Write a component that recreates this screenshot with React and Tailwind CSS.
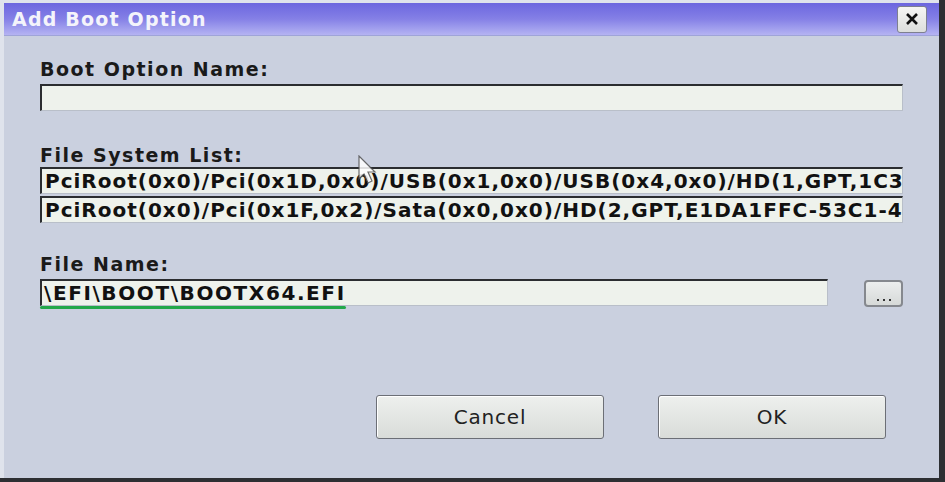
import React from 'react';

const font = { fontFamily: '"DejaVu Sans", Verdana, sans-serif' };

const Field = ({ className = '', children }) => (
  <div
    className={`flex items-center overflow-hidden whitespace-nowrap bg-[#eef2ec] border-t-2 border-l-2 border-[#2b2d30] border-r border-b border-r-[#b9bfc9] border-b-[#b9bfc9] ${className}`}
  >
    {children}
  </div>
);

const Button = ({ children }) => (
  <button className="w-[228px] h-[44px] rounded-[3px] border border-[#6c6f76] bg-gradient-to-b from-[#eef0ee] to-[#d9dcd9] text-[20px] text-[#222] tracking-[0.8px] shadow-[inset_1px_1px_0_#fff]">
    {children}
  </button>
);

export default function App() {
  return (
    <div className="w-[945px] h-[482px] bg-[#2d2f33] overflow-hidden" style={font}>
      <div className="relative w-[939px] h-[478px] bg-[#cad0df] border-l-[4px] border-t-[3px] border-[#dfe3ec] flex flex-col">
        {/* title bar */}
        <div className="h-[33px] flex items-center justify-between pl-[8px] pr-[12px] bg-gradient-to-b from-[#6c66df] via-[#8580e6] to-[#b5b3f2] border-b border-[#9fa4d8]">
          <span className="text-[19px] font-bold text-[#f4f4fb] tracking-[1.2px]">Add Boot Option</span>
          <div className="w-[30px] h-[27px] rounded-[3px] border border-[#7d8090] bg-gradient-to-b from-[#f6f6f4] to-[#dcdedc] flex items-center justify-center">
            <svg width="14" height="12" viewBox="0 0 14 12">
              <path d="M2 1 L12 11 M12 1 L2 11" stroke="#111" strokeWidth="2.6" />
            </svg>
          </div>
        </div>

        <div className="flex flex-col pl-[36px] pr-[36px]">
          <div className="mt-[22px] text-[19px] font-bold text-[#1a1a1a] leading-[22px] tracking-[1.5px]">Boot Option Name:</div>
          <Field className="mt-[4px] w-[863px] h-[27px]" />

          <div className="mt-[33px] text-[19px] font-bold text-[#1a1a1a] leading-[22px] tracking-[1.5px]">File System List:</div>
          <div className="mt-[1px] flex flex-col gap-[2px]">
            <Field className="w-[863px] h-[27px] pl-[3px] text-[20px] text-[#111] font-bold tracking-[1px]">
              PciRoot(0x0)/Pci(0x1D,0x0)/USB(0x1,0x0)/USB(0x4,0x0)/HD(1,GPT,1C3
            </Field>
            <Field className="w-[863px] h-[27px] pl-[3px] text-[20px] text-[#111] font-bold tracking-[1px]">
              PciRoot(0x0)/Pci(0x1F,0x2)/Sata(0x0,0x0)/HD(2,GPT,E1DA1FFC-53C1-4
            </Field>
          </div>

          <div className="mt-[30px] text-[19px] font-bold text-[#1a1a1a] leading-[22px] tracking-[1.5px]">File Name:</div>
          <div className="mt-[4px] flex items-center">
            <div className="flex flex-col">
              <Field className="w-[788px] h-[27px] pl-[2px] text-[20px] text-[#111] font-bold tracking-[1.6px]">
                \EFI\BOOT\BOOTX64.EFI
              </Field>
              <div className="w-[306px] h-[3px] bg-[#22a84a] rounded-full" />
            </div>
            <div className="ml-[36px] mb-[2px] w-[40px] h-[27px] rounded-[4px] border-2 border-[#85888e] bg-gradient-to-b from-[#eceeee] to-[#d6d9d8] flex items-end justify-center pb-[4px] gap-[4px]">
              <span className="w-[2px] h-[2px] bg-[#333]" />
              <span className="w-[2px] h-[2px] bg-[#333]" />
              <span className="w-[2px] h-[2px] bg-[#333]" />
            </div>
          </div>

          <div className="mt-[86px] flex gap-[54px] pl-[336px]">
            <Button>Cancel</Button>
            <Button>OK</Button>
          </div>
        </div>

        {/* mouse pointer */}
        <svg className="absolute left-[354px] top-[152px]" width="22" height="30" viewBox="0 0 22 30">
          <path d="M1 1 L1 24 L6 19 L10 28 L14 26 L10 17 L17 17 Z" fill="#ffffff" stroke="#555" strokeWidth="1.2" opacity="0.85" />
        </svg>
      </div>
    </div>
  );
}
